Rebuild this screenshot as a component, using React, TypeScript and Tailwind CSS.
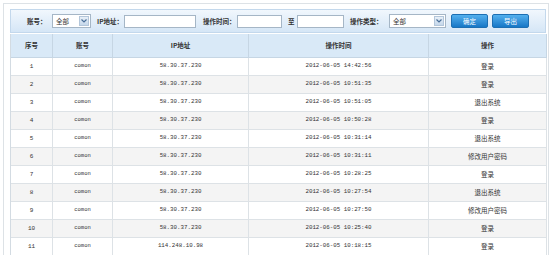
import React from "react";

const rows = [
  ["1", "58.30.37.230", "2012-06-05 14:42:56", "登录"],
  ["2", "58.30.37.230", "2012-06-05 10:51:35", "登录"],
  ["3", "58.30.37.230", "2012-06-05 10:51:05", "退出系统"],
  ["4", "58.30.37.230", "2012-06-05 10:50:28", "登录"],
  ["5", "58.30.37.230", "2012-06-05 10:31:14", "退出系统"],
  ["6", "58.30.37.230", "2012-06-05 10:31:11", "修改用户密码"],
  ["7", "58.30.37.230", "2012-06-05 10:28:25", "登录"],
  ["8", "58.30.37.230", "2012-06-05 10:27:54", "退出系统"],
  ["9", "58.30.37.230", "2012-06-05 10:27:50", "修改用户密码"],
  ["10", "58.30.37.230", "2012-06-05 10:25:40", "登录"],
  ["11", "114.248.10.98", "2012-06-05 10:18:15", "登录"],
];

const cjk = "[font-family:'Noto_Sans_CJK_SC',sans-serif]";
const mono = "[font-family:'Liberation_Mono','Noto_Sans_CJK_SC',monospace]";

function Select({ w }: { w: string }) {
  return (
    <div className={`${w} h-[14px] border border-[#a5b6c6] bg-white flex items-center justify-between`}>
      <span className={`${cjk} text-[6.5px] text-[#333] pl-[3px] leading-none`}>全部</span>
      <span className="w-[10px] h-[10px] mr-[1px] bg-gradient-to-b from-[#e8f0f8] to-[#c5d7ea] border border-[#b3c6da] flex items-center justify-center">
        <svg width="6" height="4" viewBox="0 0 6 4">
          <path d="M0.5 0.5 L3 3 L5.5 0.5" fill="none" stroke="#4a6f99" strokeWidth="1.2" />
        </svg>
      </span>
    </div>
  );
}

function Label({ children, cls }: { children: React.ReactNode; cls: string }) {
  return (
    <span className={`${cjk} text-[6.5px] font-bold text-[#333] leading-none whitespace-nowrap ${cls}`}>{children}</span>
  );
}

function Btn({ children, cls }: { children: React.ReactNode; cls: string }) {
  return (
    <div
      className={`${cjk} ${cls} w-[37px] h-[14px] rounded-[2px] bg-gradient-to-b from-[#52b0ee] to-[#1677c6] border border-[#1d6fb3] text-white text-[6.5px] flex items-center justify-center leading-none`}
    >
      {children}
    </div>
  );
}

export default function App() {
  return (
    <div className="w-[551px] h-[255px] overflow-hidden bg-white pl-[3px] pt-[3px]">
      <div className="w-[546px] h-[260px] border-l border-t border-r border-[#dde2e6] pl-[6px] pt-[5px]">
        {/* toolbar */}
        <div className="w-[536px] h-[24px] border border-[#c3d8ec] bg-gradient-to-b from-[#f1f7fd] to-[#d5e6f6] flex items-center">
          <Label cls="ml-[16px] w-[24px]">账号：</Label>
          <Select w="w-[39px] ml-[1px]" />
          <Label cls="ml-[6px] w-[26px]">IP地址：</Label>
          <div className="w-[72px] h-[13px] ml-[1px] border border-[#a5b6c6] bg-white" />
          <Label cls="ml-[7px] w-[34px]">操作时间：</Label>
          <div className="w-[45px] h-[13px] border border-[#a5b6c6] bg-white" />
          <Label cls="ml-[6px] w-[9px]">至</Label>
          <div className="w-[47px] h-[13px] border border-[#a5b6c6] bg-white" />
          <Label cls="ml-[6px] w-[39px]">操作类型：</Label>
          <Select w="w-[57px]" />
          <Btn cls="ml-[5px]">确定</Btn>
          <Btn cls="ml-[4px]">导出</Btn>
        </div>
        {/* table */}
        <div className="w-[536px] mt-[1px] border-l border-[#d3dbe2] grid grid-cols-[42px_60px_136px_180px_118px]">
          {["序号", "账号", "IP地址", "操作时间", "操作"].map((h) => (
            <div
              key={h}
              className={`${cjk} h-[24px] bg-[#d9e9f7] border-r border-b border-[#c6d6e4] flex items-center justify-center text-[6.5px] font-bold text-[#333]`}
            >
              {h}
            </div>
          ))}
          {rows.map((r, i) => {
            const bg = i % 2 === 1 ? "bg-[#f4f4f4]" : "bg-white";
            const cell = `h-[18px] ${bg} border-r border-b border-[#dde2e6] flex items-center justify-center text-[#333]`;
            return (
              <React.Fragment key={i}>
                <div className={`${cell} ${mono} text-[6px]`}>{r[0]}</div>
                <div className={`${cell} ${mono} text-[5.5px]`}>comon</div>
                <div className={`${cell} ${mono} text-[5.8px]`}>{r[1]}</div>
                <div className={`${cell} ${mono} text-[5.8px]`}>{r[2]}</div>
                <div className={`${cell} ${cjk} text-[6.5px]`}>{r[3]}</div>
              </React.Fragment>
            );
          })}
        </div>
      </div>
    </div>
  );
}
